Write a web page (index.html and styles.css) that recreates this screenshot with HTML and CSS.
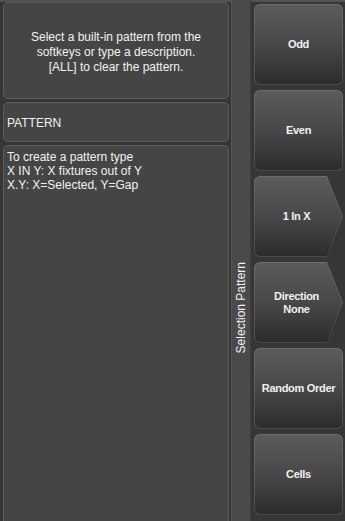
FILE: index.html
```html
<!DOCTYPE html>
<html lang="en">
<head>
  <meta charset="UTF-8" />
  <title>Selection Pattern</title>
  <link rel="stylesheet" href="styles.css">
</head>
<body>
  <div class="screen">
    <div class="left">
      <div class="box prompt">
        Select a built-in pattern from the<br>
        softkeys or type a description.<br>
        [ALL] to clear the pattern.
      </div>
      <div class="box field">PATTERN</div>
      <div class="box info">
        To create a pattern type<br>
        X IN Y: X fixtures out of Y<br>
        X.Y: X=Selected, Y=Gap
      </div>
    </div>

    <div class="strip"><span>Selection Pattern</span></div>

    <div class="keys">
      <div class="key"><div class="key-face">Odd</div></div>
      <div class="key"><div class="key-face">Even</div></div>
      <div class="key arrow"><div class="key-face">1 In X</div></div>
      <div class="key arrow"><div class="key-face">Direction<br>None</div></div>
      <div class="key"><div class="key-face">Random Order</div></div>
      <div class="key"><div class="key-face">Cells</div></div>
    </div>
  </div>
</body>
</html>
```

FILE: styles.css
```css
:root {
  --bg: #363636;
  --panel: #454545;
  --panel-edge: #5c5c5c;
  --strip: #4a4a4a;
  --text: #f2f2f2;
}

* {
  box-sizing: border-box;
  margin: 0;
  padding: 0;
}

html, body {
  width: 345px;
  height: 521px;
  overflow: hidden;
  background: var(--bg);
  color: var(--text);
  font-family: 'Liberation Sans', Arial, sans-serif;
}

.screen {
  display: flex;
  height: 521px;
  border-top: 2px solid #4c535b;
}

/* left side: prompt, command line, help */
.left {
  width: 230px;
  flex-shrink: 0;
  display: flex;
  flex-direction: column;
  gap: 3px;
  padding-left: 3px;
  padding-right: 1px;
}

.box {
  flex-shrink: 0;
  background: var(--panel);
  border: 1px solid var(--panel-edge);
  border-radius: 5px;
}

.prompt {
  height: 97px;
  display: flex;
  align-items: center;
  justify-content: center;
  text-align: center;
  font-size: 12px;
  line-height: 15px;
  padding-top: 3px;
}

.field {
  height: 40px;
  display: flex;
  align-items: center;
  padding: 1px 3px 0;
  font-size: 12px;
}

.info {
  height: 400px;
  padding: 4px 3px;
  font-size: 12px;
  line-height: 14px;
}

/* vertical softkey bank label */
.strip {
  width: 20px;
  flex-shrink: 0;
  margin-left: 1px;
  margin-top: -2px;
  background: var(--strip);
  border-left: 1px solid #575757;
  border-right: 1px solid #3e3e3e;
  display: flex;
  flex-direction: column;
  align-items: center;
  padding-top: 262px;
}

.strip span {
  writing-mode: vertical-rl;
  transform: rotate(180deg);
  font-size: 12px;
  white-space: nowrap;
  line-height: 14px;
}

/* softkeys */
.keys {
  width: 89px;
  flex-shrink: 0;
  margin-left: 3px;
  padding-top: 2px;
  display: flex;
  flex-direction: column;
  gap: 5px;
}

.key {
  height: 81px;
  flex-shrink: 0;
  background: linear-gradient(#6c6c6c, #4a4a4a);
  border-radius: 6px;
  padding: 1px;
  display: flex;
}

.key-face {
  flex: 1;
  border-radius: 5px;
  background: linear-gradient(#5b5b5b 0%, #484848 50%, #2c2c2c 100%);
  display: flex;
  align-items: center;
  justify-content: center;
  text-align: center;
  font-size: 11px;
  font-weight: 700;
  letter-spacing: -0.3px;
  line-height: 13px;
}

.key.arrow {
  clip-path: polygon(0 0, 73px 0, 100% 50%, 73px 100%, 0 100%);
}

.key.arrow .key-face {
  clip-path: polygon(0 0, 72px 0, 100% 50%, 72px 100%, 0 100%);
  padding-right: 4px;
}
```
